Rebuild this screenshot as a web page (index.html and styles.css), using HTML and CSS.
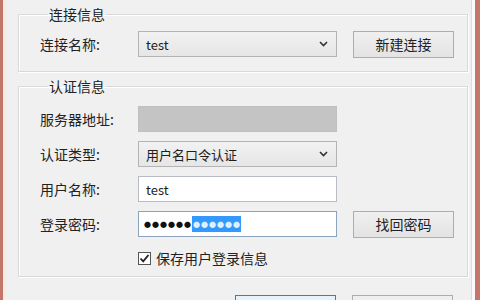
FILE: index.html
```html
<!DOCTYPE html>
<html lang="zh-CN">
<head>
  <meta charset="UTF-8" />
  <title>登录设置</title>
  <link rel="stylesheet" href="styles.css">
</head>
<body>

<div class="window">
  <fieldset class="group group-conn">
    <legend>连接信息</legend>
    <div class="row">
      <span class="label">连接名称:</span>
      <div class="combo">
        <span class="value">test</span>
        <svg class="arrow" width="9" height="6" viewBox="0 0 9 6"><path d="M1 1 L4.5 4.5 L8 1" fill="none" stroke="#333" stroke-width="1.6"/></svg>
      </div>
      <div class="btn">新建连接</div>
    </div>
  </fieldset>

  <fieldset class="group group-auth">
    <legend>认证信息</legend>
    <div class="row">
      <span class="label">服务器地址:</span>
      <div class="field disabled"></div>
    </div>
    <div class="row">
      <span class="label">认证类型:</span>
      <div class="combo">
        <span class="value">用户名口令认证</span>
        <svg class="arrow" width="9" height="6" viewBox="0 0 9 6"><path d="M1 1 L4.5 4.5 L8 1" fill="none" stroke="#333" stroke-width="1.6"/></svg>
      </div>
    </div>
    <div class="row">
      <span class="label">用户名称:</span>
      <div class="field"><span class="value">test</span></div>
    </div>
    <div class="row">
      <span class="label">登录密码:</span>
      <div class="field focused">
        <span class="dots">●●●●●●</span><span class="dots selected">●●●●●●</span>
      </div>
      <div class="btn">找回密码</div>
    </div>
    <div class="check-row">
      <span class="checkbox">
        <svg width="11" height="11" viewBox="0 0 11 11"><path d="M1.5 5.5 L4.2 8.3 L9.5 2" fill="none" stroke="#222" stroke-width="1.8"/></svg>
      </span>
      <span class="check-label">保存用户登录信息</span>
    </div>
  </fieldset>

  <div class="actions">
    <div class="btn default"></div>
    <div class="btn"></div>
  </div>
</div>

</body>
</html>
```

FILE: styles.css
```css
* {
  box-sizing: border-box;
  margin: 0;
  padding: 0;
}

html, body {
  width: 480px;
  height: 300px;
  overflow: hidden;
}

body {
  font-family: "Noto Sans CJK SC", "Noto Sans", sans-serif;
  font-size: 14px;
  color: #1e1e1e;
  background: #f0f0f0;
}

.window {
  height: 300px;
  border-left: 3px solid #c4766a;
  border-right: 5px solid #c4766a;
  box-shadow: inset 3px 0 0 #f7ebe4, inset -3px 0 0 #fafafa, inset -4px 0 0 #dcdcdc;
  padding: 4px 7px 0 15px;
}

.group {
  border: 1px solid #d9d9d9;
  box-shadow: 1px 1px 0 #fff, inset 1px 1px 0 #fff;
  padding: 7px 0 14px 21px;
}

.group legend {
  margin-left: 8px;
  padding: 0 1px;
  height: 20px;
  line-height: 20px;
  color: #222;
}

.group-auth {
  margin-top: 4px;
  padding-top: 10px;
  padding-bottom: 9px;
}

.row {
  display: flex;
  align-items: center;
  height: 26px;
  margin-bottom: 9px;
}

.group-conn .row {
  margin-bottom: 0;
}

.label {
  width: 98px;
  color: #222;
}

.combo,
.field {
  width: 199px;
  height: 26px;
  display: flex;
  align-items: center;
  padding: 0 7px;
  font-size: 13px;
}

.combo {
  justify-content: space-between;
  border: 1px solid #b4b4b4;
  background: linear-gradient(#f2f2f2, #e6e6e6);
}

.combo .arrow {
  margin-right: 1px;
}

.field {
  border: 1px solid #b8bcc4;
  background: #fff;
}

.field.disabled {
  background: #c4c4c4;
  border-color: #c0c0c0;
}

.field.focused {
  border-color: #8aa4bd;
  padding: 0 5px;
}

.dots {
  display: inline-block;
  font-size: 7px;
  letter-spacing: 1px;
  line-height: 16px;
  height: 16px;
  color: #111;
}

.dots.selected {
  background: #3399ff;
  color: #dff0ff;
  padding-left: 1px;
}

.btn {
  width: 101px;
  height: 27px;
  margin-left: 16px;
  border: 1px solid #adadad;
  background: linear-gradient(#f0f0f0, #e3e3e3);
  display: flex;
  align-items: center;
  justify-content: center;
  color: #222;
}

.check-row {
  display: flex;
  align-items: center;
  gap: 5px;
  height: 18px;
  margin: 12px 0 0 98px;
}

.checkbox {
  width: 13px;
  height: 13px;
  border: 1px solid #555;
  background: #fff;
  display: flex;
  align-items: center;
  justify-content: center;
}

.check-label {
  color: #222;
}

.actions {
  display: flex;
  margin: 18px 0 0 217px;
}

.actions .btn:first-child {
  margin-left: 0;
}

.btn.default {
  border-color: #3c7fb1;
  background: #e5f1fb;
}
```
